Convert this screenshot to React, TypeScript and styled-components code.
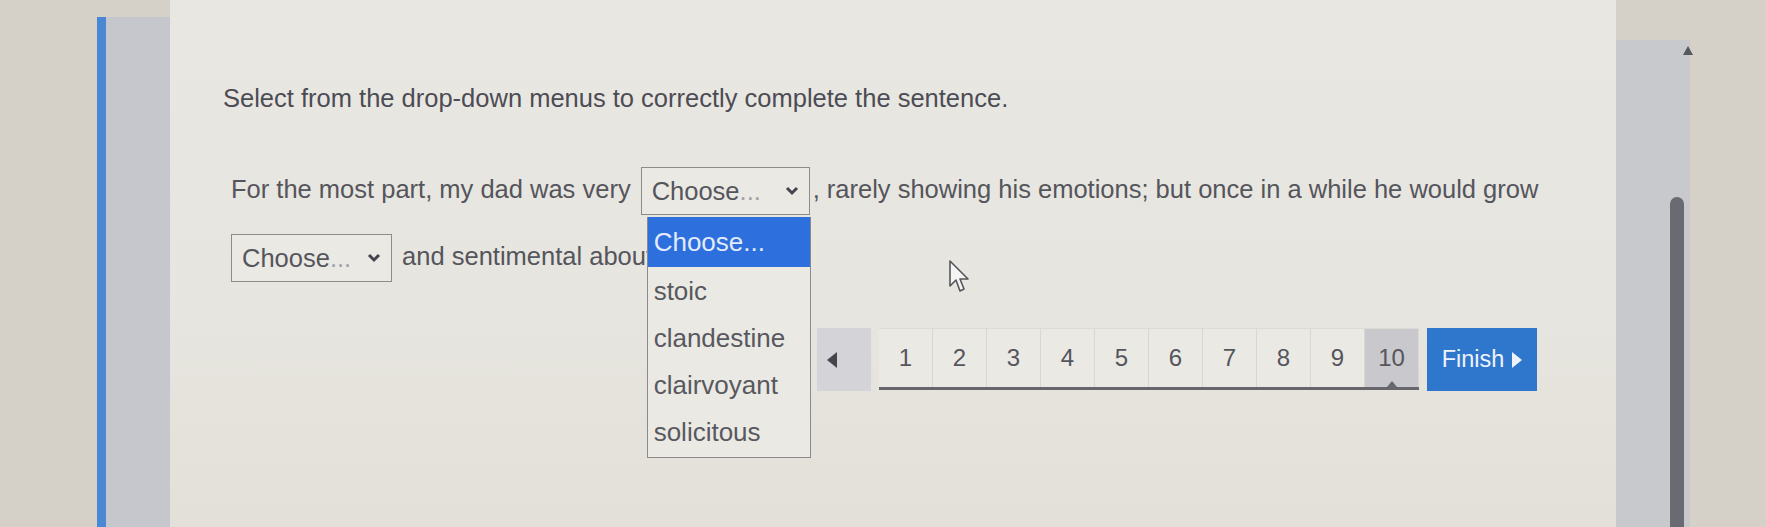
import styled, { createGlobalStyle } from "styled-components";

const GlobalStyle = createGlobalStyle`
    html, body {
        margin: 0;
        padding: 0;
        background: #d5d0c7;
    }
    body {
        font-family: "Liberation Sans", Arial, sans-serif;
    }
`;

const Page = styled.div`
    position: relative;
    display: grid;
    grid-template-columns: 97px 9px 64px 1fr 74px 76px;
    width: 1766px;
    height: 527px;
    overflow: hidden;
    background: #d6d1c8;
`;

const Stripe = styled.div`
    margin-top: 17px;
    background: #4a88d4;
`;

const SidePanel = styled.div`
    margin-top: 17px;
    background: #c6c7cc;
`;

const Content = styled.main`
    background: linear-gradient(180deg, #e9e7e2 0%, #e7e5df 60%, #e3e0d9 100%);
    padding: 83px 0 0 53px;
    color: #55555c;
`;

const Title = styled.h1`
    margin: 0;
    font-size: 25.5px;
    font-weight: 400;
    line-height: 30px;
    color: #4c4c55;
`;

const Sentence = styled.div`
    margin: 43px 30px 0 8px;
    font-size: 25.5px;
    line-height: 67px;
`;

const SelectWrap = styled.span<{ $width: number; $gapLeft: number }>`
    position: relative;
    display: inline-flex;
    align-items: center;
    justify-content: space-between;
    box-sizing: border-box;
    width: ${(p) => p.$width}px;
    height: 48px;
    margin: 0 3px 0 ${(p) => p.$gapLeft}px;
    padding: 0 10px;
    vertical-align: middle;
    border: 1px solid #8c8c8c;
    background: #ebe9e4;
    line-height: 1;
`;

const Faded = styled.span`
    color: #a0a0a6;
`;

const Chevron = () => (
    <svg width="14" height="10" viewBox="0 0 14 10">
        <polyline points="2,2 7,7 12,2" fill="none" stroke="#45454d" strokeWidth="3" />
    </svg>
);

const List = styled.ul`
    position: absolute;
    top: 49px;
    left: 5px;
    z-index: 5;
    box-sizing: border-box;
    width: 164px;
    height: 241px;
    margin: 0;
    padding: 0;
    list-style: none;
    border: 1px solid #8a8a8a;
    border-top: none;
    background: #ebe9e4;
`;

const Option = styled.li<{ $active?: boolean }>`
    height: ${(p) => (p.$active ? 50 : 47)}px;
    padding-left: 6px;
    display: flex;
    align-items: center;
    font-size: 26px;
    color: ${(p) => (p.$active ? "#e3ebfb" : "#58585f")};
    background: ${(p) => (p.$active ? "#2d6fdc" : "transparent")};
`;

const Pager = styled.div`
    display: flex;
    justify-content: flex-end;
    align-items: flex-start;
    gap: 8px;
    margin-top: 38px;
    padding-right: 79px;
`;

const PrevButton = styled.div`
    width: 54px;
    height: 63px;
    display: flex;
    align-items: center;
    padding-left: 10px;
    box-sizing: border-box;
    background: #d3d3d8;
`;

const Numbers = styled.div`
    display: flex;
    border-bottom: 3px solid #66666c;
`;

const NumberCell = styled.div<{ $current?: boolean }>`
    position: relative;
    width: 54px;
    height: 59px;
    display: flex;
    align-items: center;
    justify-content: center;
    font-size: 24px;
    color: #55555c;
    background: ${(p) => (p.$current ? "#c8c8cd" : "#eae9e4")};
    border-right: 1px solid #d8d7d2;
    border-top: 1px solid #dcdbd6;
    box-sizing: border-box;
`;

const Marker = styled.span`
    position: absolute;
    bottom: 0;
    left: 50%;
    transform: translateX(-50%);
    width: 0;
    height: 0;
    border-left: 5px solid transparent;
    border-right: 5px solid transparent;
    border-bottom: 6px solid #66666c;
`;

const FinishButton = styled.button`
    width: 110px;
    height: 63px;
    display: flex;
    align-items: center;
    justify-content: center;
    gap: 8px;
    border: none;
    background: #2f76cd;
    color: #eef3fb;
    font-family: "Liberation Sans", Arial, sans-serif;
    font-size: 23.5px;
`;

const RightPanel = styled.div`
    margin-top: 40px;
    display: flex;
    justify-content: flex-end;
    padding: 157px 6px 0 0;
    background: #c8c9cc;
`;

const Thumb = styled.div`
    width: 14px;
    border-radius: 7px 7px 0 0;
    background: #6a6a72;
`;

const ScrollEdge = styled.div`
    padding: 46px 0 0 0;
    margin-left: -7px;
`;

const UpArrow = styled.span`
    display: block;
    width: 0;
    height: 0;
    border-left: 5px solid transparent;
    border-right: 5px solid transparent;
    border-bottom: 9px solid #57575e;
`;

const Cursor = styled.svg`
    position: absolute;
    left: 949px;
    top: 260px;
    z-index: 10;
`;

export default function App() {
    const pages = [1, 2, 3, 4, 5, 6, 7, 8, 9, 10];

    return (
        <>
            <GlobalStyle />
            <Page>
                <div />
                <Stripe />
                <SidePanel />
                <Content>
                    <Title>Select from the drop-down menus to correctly complete the sentence.</Title>
                    <Sentence>
                        For the most part, my dad was very
                        <SelectWrap $width={169} $gapLeft={10}>
                            <span>
                                Choose<Faded>...</Faded>
                            </span>
                            <Chevron />
                            <List>
                                <Option $active>Choose...</Option>
                                <Option>stoic</Option>
                                <Option>clandestine</Option>
                                <Option>clairvoyant</Option>
                                <Option>solicitous</Option>
                            </List>
                        </SelectWrap>
                        , rarely showing his emotions; but once in a while he would grow{" "}
                        <SelectWrap $width={161} $gapLeft={0}>
                            <span>
                                Choose<Faded>...</Faded>
                            </span>
                            <Chevron />
                        </SelectWrap>
                        {" "}and sentimental about family.
                    </Sentence>
                    <Pager>
                        <PrevButton>
                            <svg width="10" height="16" viewBox="0 0 10 16">
                                <polygon points="10,0 0,8 10,16" fill="#45454d" />
                            </svg>
                        </PrevButton>
                        <Numbers>
                            {pages.map((n) => (
                                <NumberCell key={n} $current={n === 10}>
                                    {n}
                                    {n === 10 && <Marker />}
                                </NumberCell>
                            ))}
                        </Numbers>
                        <FinishButton>
                            Finish
                            <svg width="10" height="16" viewBox="0 0 10 16">
                                <polygon points="0,0 10,8 0,16" fill="#eef3fb" />
                            </svg>
                        </FinishButton>
                    </Pager>
                </Content>
                <RightPanel>
                    <Thumb />
                </RightPanel>
                <ScrollEdge>
                    <UpArrow />
                </ScrollEdge>
                <Cursor width="22" height="34" viewBox="0 0 22 34">
                    <path
                        d="M1 1 L1 26 L7 20 L11 31 L15 29 L11 19 L19 19 Z"
                        fill="#f4f4f2"
                        stroke="#55555c"
                        strokeWidth="1.6"
                        strokeLinejoin="round"
                    />
                </Cursor>
            </Page>
        </>
    );
}
